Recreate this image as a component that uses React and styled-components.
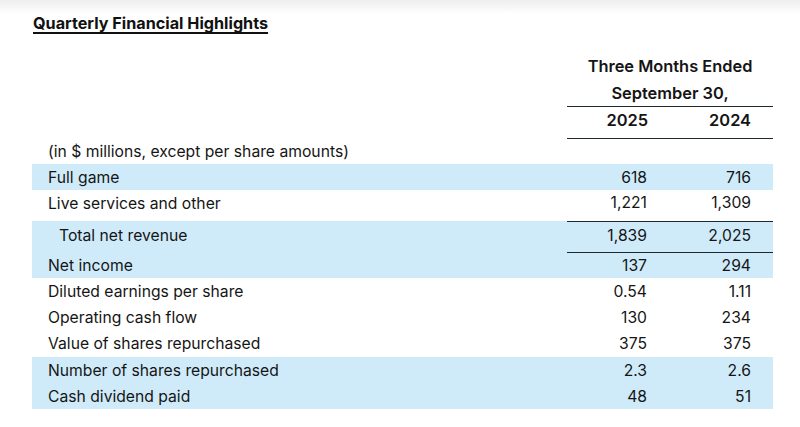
import React from "react";
import styled, { createGlobalStyle } from "styled-components";

const Global = createGlobalStyle`
  html, body { margin: 0; padding: 0; background: #fff; }
  body { font-family: Inter, "Liberation Sans", sans-serif; color: #151515; }
`;

const Page = styled.div`
  width: 800px;
  height: 427px;
  box-sizing: border-box;
  padding: 11px 27px 0 32px;
  background: linear-gradient(to bottom, #eeeeee 0px, #ffffff 14px);
  overflow: hidden;
`;

const Title = styled.h1`
  margin: 0 0 0 1px;
  font-size: 16.2px;
  font-weight: 700;
  line-height: 24px;
  color: #111;
  text-decoration: underline;
  text-decoration-thickness: 1.5px;
  text-underline-offset: 3px;
  text-decoration-skip-ink: none;
`;

const Table = styled.table`
  width: 741px;
  margin-top: 17px;
  border-collapse: collapse;
  table-layout: fixed;
  font-size: 15.7px;
`;

const Row = styled.tr`
  background: ${p => (p.$shade ? "#cfebfa" : "transparent")};
  height: ${p => p.$h || 26}px;
`;

const Label = styled.td`
  padding: 0 0 ${p => p.$pb || 0}px ${p => (p.$indent ? 27 : 16)}px;
  vertical-align: middle;
  white-space: nowrap;
`;

const Num = styled.td`
  text-align: right;
  padding: 0 ${p => p.$pr || 23}px ${p => p.$pb || 0}px 0;
  vertical-align: middle;
  border-top: ${p => (p.$rule ? "1.5px solid #1c2a30" : "none")};
  white-space: nowrap;
`;

const HeadCell = styled.th`
  font-weight: 600;
  font-size: 16.4px;
  text-align: ${p => p.$align || "center"};
  padding: 0 ${p => p.$pr || 0}px ${p => p.$pb || 0}px 0;
  border-bottom: ${p => (p.$ruleBottom ? "1.5px solid #1c2a30" : "none")};
  white-space: nowrap;
`;

const rows = [
  { label: "Full game", a: "618", b: "716", shade: true, h: 26 },
  { label: "Live services and other", a: "1,221", b: "1,309", h: 31, pb: 5 },
  { label: "Total net revenue", a: "1,839", b: "2,025", shade: true, h: 31, pb: 3, indent: true, rule: true },
  { label: "Net income", a: "137", b: "294", shade: true, h: 26, rule: true },
  { label: "Diluted earnings per share", a: "0.54", b: "1.11" },
  { label: "Operating cash flow", a: "130", b: "234" },
  { label: "Value of shares repurchased", a: "375", b: "375", h: 27 },
  { label: "Number of shares repurchased", a: "2.3", b: "2.6", shade: true },
  { label: "Cash dividend paid", a: "48", b: "51", shade: true },
];

export default function App() {
  return (
    <>
      <Global />
      <Page>
        <Title>Quarterly Financial Highlights</Title>
        <Table>
          <colgroup>
            <col style={{ width: "535px" }} />
            <col style={{ width: "103px" }} />
            <col style={{ width: "103px" }} />
          </colgroup>
          <thead>
            <Row $h={28}>
              <th />
              <HeadCell colSpan={2}>Three Months Ended</HeadCell>
            </Row>
            <Row $h={26}>
              <th />
              <HeadCell colSpan={2} $ruleBottom>September 30,</HeadCell>
            </Row>
            <Row $h={32}>
              <th />
              <HeadCell $align="right" $pr={22} $pb={4} $ruleBottom>2025</HeadCell>
              <HeadCell $align="right" $pr={22} $pb={4} $ruleBottom>2024</HeadCell>
            </Row>
          </thead>
          <tbody>
            <Row $h={26}>
              <Label colSpan={3}>(in $ millions, except per share amounts)</Label>
            </Row>
            {rows.map(r => (
              <Row key={r.label} $shade={r.shade} $h={r.h}>
                <Label $indent={r.indent} $pb={r.pb}>{r.label}</Label>
                <Num $rule={r.rule} $pb={r.pb}>{r.a}</Num>
                <Num $rule={r.rule} $pb={r.pb} $pr={22}>{r.b}</Num>
              </Row>
            ))}
          </tbody>
        </Table>
      </Page>
    </>
  );
}
